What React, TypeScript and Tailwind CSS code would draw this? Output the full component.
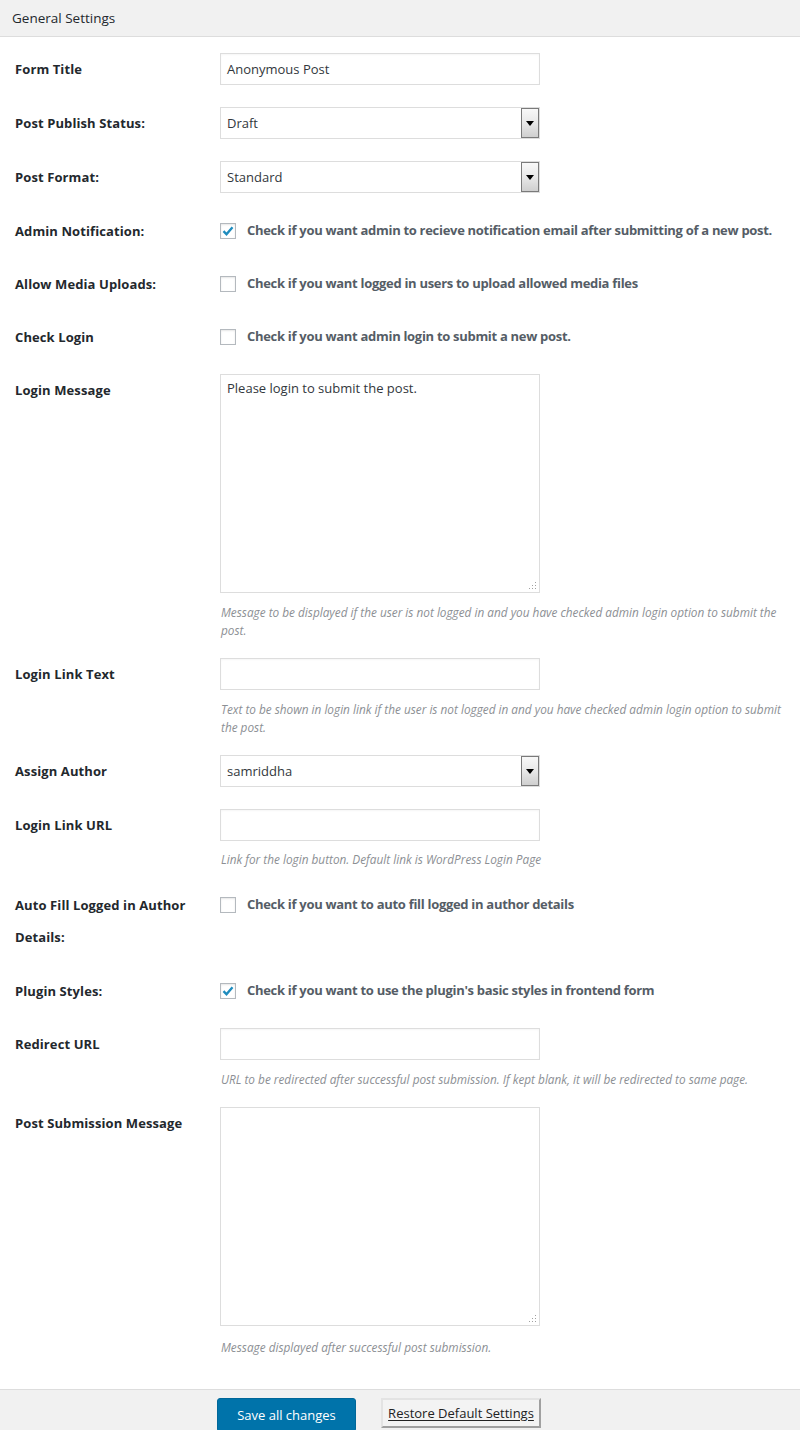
import React from "react";

//fonts
const FONT = { fontFamily: '"Open Sans", "Noto Sans", Arial, sans-serif' };

interface RowProps {
  label: React.ReactNode;
  children: React.ReactNode;
  className?: string;
}

const Row = ({ label, children, className = "py-[11px]" }: RowProps) => (
  <div className={`flex items-start ${className}`}>
    <div className="w-[220px] shrink-0 pl-[15px] pr-[20px] text-[13px] font-bold leading-[32px] text-[#23282d] tracking-[0.1px]">{label}</div>
    <div className="flex-1 min-w-0 pr-[12px]">{children}</div>
  </div>
);

const TextInput = ({ value = "" }: { value?: string }) => (
  <div className="w-[320px] h-[32px] border border-[#dddddd] bg-white px-[6px] text-[13px] leading-[30px] text-[#32373c] shadow-[inset_0_1px_2px_rgba(0,0,0,0.04)]">
    {value}
  </div>
);

const SelectBox = ({ value }: { value: string }) => (
  <div className="relative w-[320px] h-[32px] border border-[#dddddd] bg-white px-[6px] text-[13px] leading-[30px] text-[#32373c]">
    {value}
    <div className="absolute right-0 top-0 w-[18px] h-[30px] border border-[#7a7a7a] bg-gradient-to-b from-[#f8f8f8] via-[#e8e8e8] to-[#cfcfcf] flex justify-center pt-[12px]">
      <svg width="8" height="5" viewBox="0 0 8 5">
        <path d="M0 0h8L4 5z" fill="#000" />
      </svg>
    </div>
  </div>
);

const Check = ({ checked, text }: { checked?: boolean; text: string }) => (
  <div className="flex items-center h-[32px] gap-[11px]">
    <div className="w-[16px] h-[16px] shrink-0 border border-[#b4b9be] bg-white flex items-center justify-center shadow-[inset_0_1px_2px_rgba(0,0,0,0.1)]">
      {checked && (
        <svg width="14" height="14" viewBox="0 0 14 14">
          <path d="M2.5 7.2l3 3.1 6-7" fill="none" stroke="#1e8cbe" strokeWidth="2.4" />
        </svg>
      )}
    </div>
    <span className="text-[13px] font-bold text-[#555d66] whitespace-nowrap tracking-[-0.3px]">{text}</span>
  </div>
);

const TextArea = ({ value = "" }: { value?: string }) => (
  <div className="relative w-[320px] h-[219px] border border-[#dddddd] bg-white px-[6px] py-[3px] text-[13px] leading-[20px] text-[#32373c]">
    {value}
    <svg className="absolute right-[2px] bottom-[2px]" width="8" height="8" viewBox="0 0 8 8">
      <g fill="#a0a0a0">
        <rect x="6" y="0" width="1" height="1" />
        <rect x="3" y="3" width="1" height="1" />
        <rect x="6" y="3" width="1" height="1" />
        <rect x="0" y="6" width="1" height="1" />
        <rect x="3" y="6" width="1" height="1" />
        <rect x="6" y="6" width="1" height="1" />
      </g>
    </svg>
  </div>
);

const Help = ({ children, className = "mt-[10px]" }: { children: React.ReactNode; className?: string }) => (
  <p className={`${className} pl-[1px] text-[11.8px] italic leading-[18px] text-[#8c8f94]`}>{children}</p>
);

export default function App() {
  return (
    <main style={FONT} className="w-[800px] h-[1430px] bg-white overflow-hidden flex flex-col">
      {/* Header */}
      <div className="h-[37px] shrink-0 bg-[#f1f1f1] border-b border-[#dddddd] pl-[12px] text-[13.5px] leading-[36px] text-[#23282d]">
        General Settings
      </div>

      <div className="pt-[5px] flex-1">
        <Row label="Form Title">
          <TextInput value="Anonymous Post" />
        </Row>
        <Row label="Post Publish Status:">
          <SelectBox value="Draft" />
        </Row>
        <Row label="Post Format:">
          <SelectBox value="Standard" />
        </Row>
        <Row label="Admin Notification:" className="pt-[11px] pb-[10px]">
          <Check checked text="Check if you want admin to recieve notification email after submitting of a new post." />
        </Row>
        <Row label="Allow Media Uploads:" className="pt-[11px] pb-[10px]">
          <Check text="Check if you want logged in users to upload allowed media files" />
        </Row>
        <Row label="Check Login" className="pt-[11px] pb-[10px]">
          <Check text="Check if you want admin login to submit a new post." />
        </Row>
        <Row label="Login Message" className="pt-[11px] pb-[8px]">
          <TextArea value="Please login to submit the post." />
          <Help>
            Message to be displayed if the user is not logged in and you have checked admin login option to submit the post.
          </Help>
        </Row>
        <Row label="Login Link Text" className="pt-[11px] pb-[8px]">
          <TextInput />
          <Help>
            Text to be shown in login link if the user is not logged in and you have checked admin login option to submit the post.
          </Help>
        </Row>
        <Row label="Assign Author">
          <SelectBox value="samriddha" />
        </Row>
        <Row label="Login Link URL" className="pt-[11px] pb-[10px]">
          <TextInput />
          <Help className="mt-[9px]">Link for the login button. Default link is WordPress Login Page</Help>
        </Row>
        <Row label="Auto Fill Logged in Author Details:">
          <Check text="Check if you want to auto fill logged in author details" />
        </Row>
        <Row label="Plugin Styles:" className="pt-[11px] pb-[10px]">
          <Check checked text="Check if you want to use the plugin's basic styles in frontend form" />
        </Row>
        <Row label="Redirect URL" className="pt-[11px] pb-[8px]">
          <TextInput />
          <Help>URL to be redirected after successful post submission. If kept blank, it will be redirected to same page.</Help>
        </Row>
        <Row label="Post Submission Message" className="pt-[11px]">
          <TextArea />
          <Help className="mt-[12px]">Message displayed after successful post submission.</Help>
        </Row>
      </div>

      {/* Footer */}
      <div className="h-[41px] shrink-0 bg-[#f1f1f1] border-t border-[#dddddd] flex items-start gap-[25px] pl-[217px] pt-[8px]">
        <button
          type="button"
          className="w-[139px] h-[34px] rounded-[3px] bg-[#0073aa] border border-[#006799] text-white text-[13px] leading-[30px]"
        >
          Save all changes
        </button>
        <button
          type="button"
          className="w-[160px] h-[30px] bg-[#f3f3f3] border-2 border-t-[#e3e3e3] border-l-[#e3e3e3] border-r-[#a0a0a0] border-b-[#a0a0a0] text-[#222222] text-[13px] leading-[26px] underline underline-offset-2"
        >
          Restore Default Settings
        </button>
      </div>
    </main>
  );
}
